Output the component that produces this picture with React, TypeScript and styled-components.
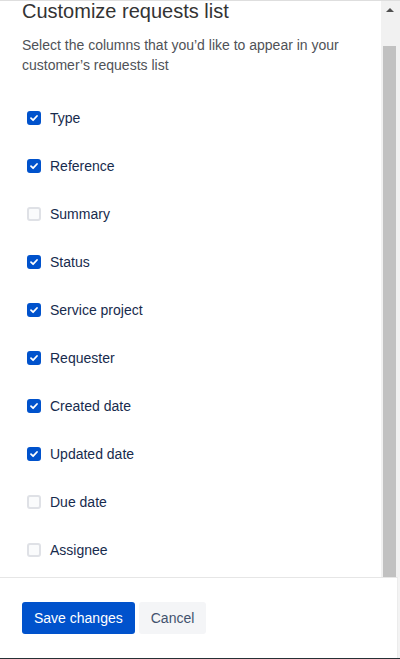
import React, { useState } from "react";
import styled, { createGlobalStyle } from "styled-components";

const GlobalStyle = createGlobalStyle`
  html, body { margin: 0; padding: 0; background: #ffffff; }
  body { font-family: "Liberation Sans", Arial, sans-serif; }
  * { box-sizing: border-box; }
`;

const Page = styled.div`
  width: 400px;
  height: 659px;
  display: flex;
  flex-direction: column;
  border-top: 1px solid #dedede;
  border-bottom: 1px solid #263035;
  background: #f3f3f3;
`;

const BodyRow = styled.div`
  flex: 1;
  display: flex;
  min-height: 0;
  overflow: hidden;
`;

const Content = styled.div`
  flex: 1;
  padding: 0 22px;
  overflow: hidden;
  background: #ffffff;
`;

const Title = styled.h1`
  margin: -2px 0 0;
  font-size: 20px;
  line-height: 24px;
  font-weight: 400;
  color: #333333;
`;

const Description = styled.p`
  margin: 12px 0 0;
  font-size: 14px;
  line-height: 20px;
  color: #4f5257;
`;

const List = styled.div`
  margin-top: 31px;
  display: flex;
  flex-direction: column;
  gap: 24px;
`;

const Row = styled.label`
  display: flex;
  align-items: center;
  height: 24px;
  cursor: pointer;
`;

const BoxWrap = styled.span`
  width: 24px;
  height: 24px;
  display: flex;
  align-items: center;
  justify-content: center;
`;

const Box = styled.span<{ $checked: boolean }>`
  width: 14px;
  height: 14px;
  border-radius: 3px;
  display: flex;
  align-items: center;
  justify-content: center;
  background: ${(p) => (p.$checked ? "#0052cc" : "#fafbfc")};
  border: 2px solid ${(p) => (p.$checked ? "#0052cc" : "#dfe1e6")};
`;

const Label = styled.span`
  margin-left: 4px;
  font-size: 14px;
  line-height: 20px;
  color: #172b4d;
`;

const Scrollbar = styled.div`
  width: 19px;
  display: flex;
  flex-direction: column;
  background: #f1f1f1;
`;

const ArrowButton = styled.div`
  height: 17px;
  display: flex;
  align-items: center;
  justify-content: center;
  padding-right: 2px;
`;

const Triangle = styled.span`
  width: 0;
  height: 0;
  border-left: 4px solid transparent;
  border-right: 4px solid transparent;
  border-bottom: 4px solid #505050;
`;

const TrackGap = styled.div`
  height: 28px;
`;

const Thumb = styled.div`
  flex: 1;
  margin: 0 4px 0 2px;
  background: #c1c1c1;
`;

const Footer = styled.div`
  height: 81px;
  margin-right: 2px;
  border-top: 1px solid #e6e6e6;
  border-right: 1px solid #ececec;
  padding: 24px 22px;
  display: flex;
  gap: 4px;
  background: #ffffff;
`;

const Button = styled.button<{ $primary?: boolean }>`
  height: 32px;
  padding: 0 12px;
  border: none;
  border-radius: 3px;
  font-family: "Liberation Sans", Arial, sans-serif;
  font-size: 14px;
  line-height: 32px;
  cursor: pointer;
  background: ${(p) => (p.$primary ? "#0052cc" : "#f4f5f7")};
  color: ${(p) => (p.$primary ? "#ffffff" : "#42526e")};
`;

const Check = () => (
  <svg width="10" height="10" viewBox="0 0 10 10" fill="none">
    <path d="M2 5.2 L4.1 7.2 L8 3" stroke="#ffffff" strokeWidth="1.8" strokeLinecap="round" strokeLinejoin="round" />
  </svg>
);

const initial = [
  { name: "Type", on: true },
  { name: "Reference", on: true },
  { name: "Summary", on: false },
  { name: "Status", on: true },
  { name: "Service project", on: true },
  { name: "Requester", on: true },
  { name: "Created date", on: true },
  { name: "Updated date", on: true },
  { name: "Due date", on: false },
  { name: "Assignee", on: false },
];

export default function App() {
  const [items, setItems] = useState(initial);
  const toggle = (i: number) =>
    setItems((prev) => prev.map((it, j) => (j === i ? { ...it, on: !it.on } : it)));

  return (
    <>
      <GlobalStyle />
      <Page>
        <BodyRow>
          <Content>
            <Title>Customize requests list</Title>
            <Description>
              Select the columns that you’d like to appear in your customer’s requests list
            </Description>
            <List>
              {items.map((it, i) => (
                <Row key={it.name} onClick={() => toggle(i)}>
                  <BoxWrap>
                    <Box $checked={it.on}>{it.on && <Check />}</Box>
                  </BoxWrap>
                  <Label>{it.name}</Label>
                </Row>
              ))}
            </List>
          </Content>
          <Scrollbar>
            <ArrowButton>
              <Triangle />
            </ArrowButton>
            <TrackGap />
            <Thumb />
          </Scrollbar>
        </BodyRow>
        <Footer>
          <Button $primary>Save changes</Button>
          <Button>Cancel</Button>
        </Footer>
      </Page>
    </>
  );
}
